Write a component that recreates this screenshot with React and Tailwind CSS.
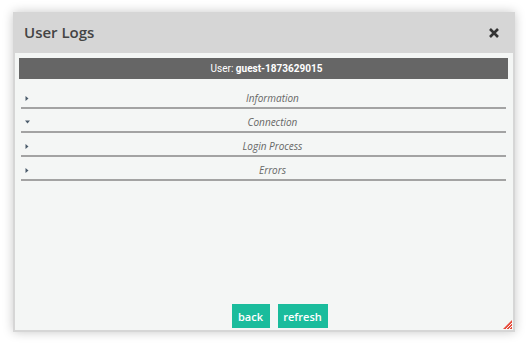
import React from "react";

const rows = [
  { label: "Information", open: false },
  { label: "Connection", open: true },
  { label: "Login Process", open: false },
  { label: "Errors", open: false },
];

function Arrow({ open }) {
  return open ? (
    <svg width="5" height="4" viewBox="0 0 5 4" className="block">
      <path d="M0 0.5 L5 0.5 L2.5 3.5 Z" fill="#4a5b6b" />
    </svg>
  ) : (
    <svg width="4" height="5" viewBox="0 0 4 5" className="block">
      <path d="M0.5 0 L3.5 2.5 L0.5 5 Z" fill="#4a5b6b" />
    </svg>
  );
}

export default function App() {
  return (
    <div className="w-[529px] h-[347px] bg-white pl-[13px] pt-[12px]" style={{ fontFamily: '"Open Sans", sans-serif' }}>
      <div className="w-[502px] h-[320px] flex flex-col bg-[#d6d6d6] px-[2px] pb-[2px] shadow-[0_0_10px_rgba(0,0,0,0.22)]">
        <div className="h-[41px] shrink-0 flex items-center justify-between pl-[9px] pr-[14px]">
          <span className="text-[15px] font-semibold text-[#444] leading-none">User Logs</span>
          <svg width="10" height="10" viewBox="0 0 10 10" className="block">
            <path d="M1 1 L9 9 M9 1 L1 9" stroke="#333" strokeWidth="2.6" strokeLinecap="butt" />
          </svg>
        </div>
        <div className="relative flex-1 flex flex-col bg-[#f4f6f5] pt-[5px] pl-[4px] pr-[5px]">
          <div className="h-[21px] bg-[#666666] flex items-center justify-center pl-[6px] text-[10px] text-white" style={{ fontFamily: 'Roboto, sans-serif' }}>
            <span className="font-normal">User:&nbsp;</span>
            <span className="font-bold">guest-1873629015</span>
          </div>
          <div className="mt-[6px] px-[2px]">
            {rows.map((r) => (
              <div key={r.label} className="relative h-[24px] border-b-2 border-[#a3a3a3] flex items-center justify-center pl-[18px]">
                <div className="absolute left-[4px] top-[11px]">
                  <Arrow open={r.open} />
                </div>
                <span className="italic text-[10px] text-[#666] leading-[14px] pt-[4px]">{r.label}</span>
              </div>
            ))}
          </div>
          <div className="mt-auto mb-[2px] flex justify-center gap-[8px] pl-[32px]">
            <button className="h-[24px] w-[38px] bg-[#1abc9c] text-white text-[11px] font-semibold leading-none">back</button>
            <button className="h-[24px] w-[50px] bg-[#1abc9c] text-white text-[11px] font-semibold leading-none">refresh</button>
          </div>
          <svg width="9" height="9" viewBox="0 0 9 9" className="absolute right-[1px] bottom-[1px]">
            <path d="M9 0 L9 9 L0 9 Z" fill="#e74c3c" />
            <path d="M9 3 L3 9 M9 6 L6 9" stroke="#f4f6f5" strokeWidth="1" />
          </svg>
        </div>
      </div>
    </div>
  );
}
